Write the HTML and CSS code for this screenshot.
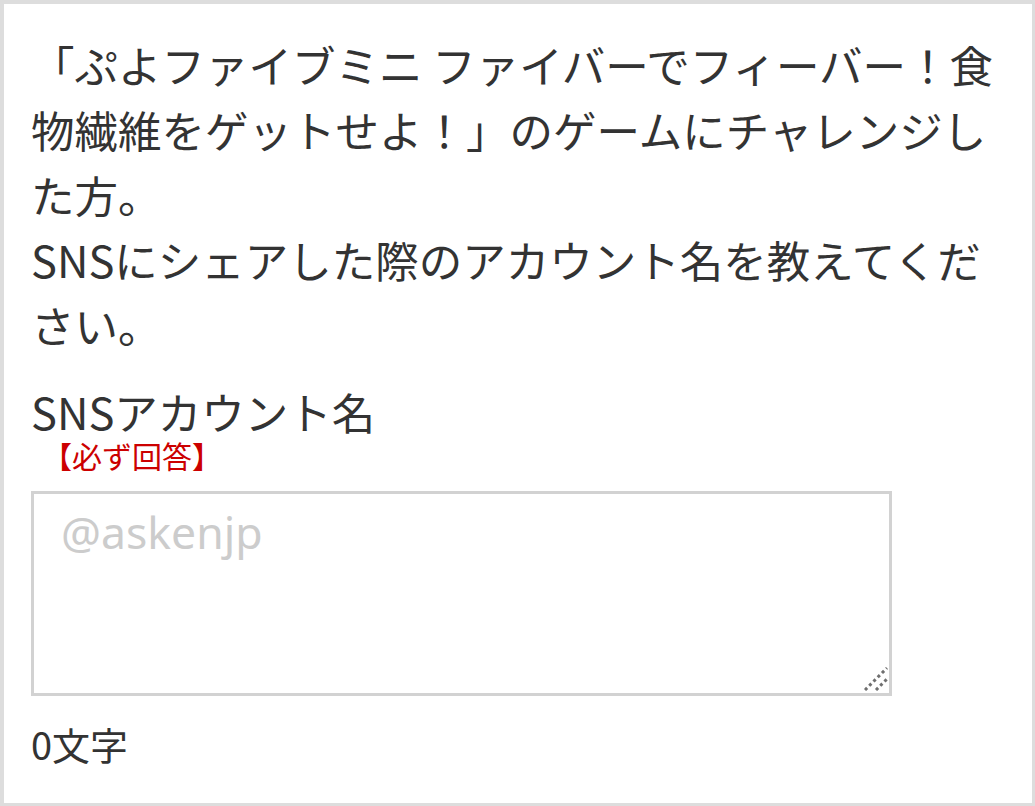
FILE: index.html
```html
<!DOCTYPE html>
<html lang="ja">
<head>
    <meta charset="UTF-8">
    <meta name="viewport" content="width=device-width, initial-scale=1.0">
    <title>SNSアカウント名</title>
    <link rel="stylesheet" href="styles.css">
</head>
<body>
    <div class="question">
        <p class="question-text">「ぷよファイブミニ ファイバーでフィーバー！食物繊維をゲットせよ！」のゲームにチャレンジした方。<br>SNSにシェアした際のアカウント名を教えてください。</p>
        <label class="field-label" for="sns_account">SNSアカウント名</label>
        <div class="required">【必ず回答】</div>
        <div class="textarea-wrap">
            <textarea id="sns_account" name="sns_account" placeholder="@askenjp"></textarea>
            <svg class="grip" width="24" height="24" viewBox="0 0 24 24">
                <line x1="1" y1="23" x2="23" y2="1" />
                <line x1="12" y1="23" x2="23" y2="12" />
            </svg>
        </div>
        <div class="counter"><span id="count">0</span>文字</div>
    </div>

    <script>
        document.getElementById('sns_account').addEventListener('input', function() {
            document.getElementById('count').innerText = this.value.length;
        });
    </script>
</body>
</html>
```

FILE: styles.css
```css
html, body {
    margin: 0;
    padding: 0;
    background-color: #ffffff;
}
body {
    font-family: "Noto Sans CJK JP", "Noto Sans", sans-serif;
    color: #333333; /* Dark gray text */
}
.question {
    box-sizing: border-box;
    width: 1035px;
    height: 806px;
    border-style: solid;
    border-color: #dddddd;
    border-width: 4px 3px 3px 4px;
    padding: 28px 26px 0 27px;
}
.question-text {
    margin: 0;
    font-size: 43.5px;
    line-height: 65px;
}
.field-label {
    display: block;
    margin-top: 33px;
    font-size: 43.5px;
    line-height: 44px;
}
.required {
    margin-top: 4px;
    padding-left: 11px;
    color: #cc0000; /* Red notice */
    font-size: 30px;
    line-height: 34px;
}
.textarea-wrap {
    position: relative;
    width: 861px;
    margin-top: 19px;
}
textarea {
    display: block;
    box-sizing: border-box;
    width: 861px;
    height: 205px;
    border: 3px solid #d2d2d2;
    border-radius: 0;
    padding: 8px 27px;
    font-family: "Noto Sans", sans-serif;
    font-size: 44.5px;
    line-height: 60px;
    color: #333333;
    resize: none;
    outline: none;
}
textarea::placeholder {
    color: #cccccc;
}
.grip {
    position: absolute;
    right: 4px;
    bottom: 5px;
}
.grip line {
    stroke: #6f6f6f;
    stroke-width: 3;
    stroke-dasharray: 3 3;
}
.counter {
    margin-top: 25px;
    font-size: 38px;
    line-height: 46px;
}
```
